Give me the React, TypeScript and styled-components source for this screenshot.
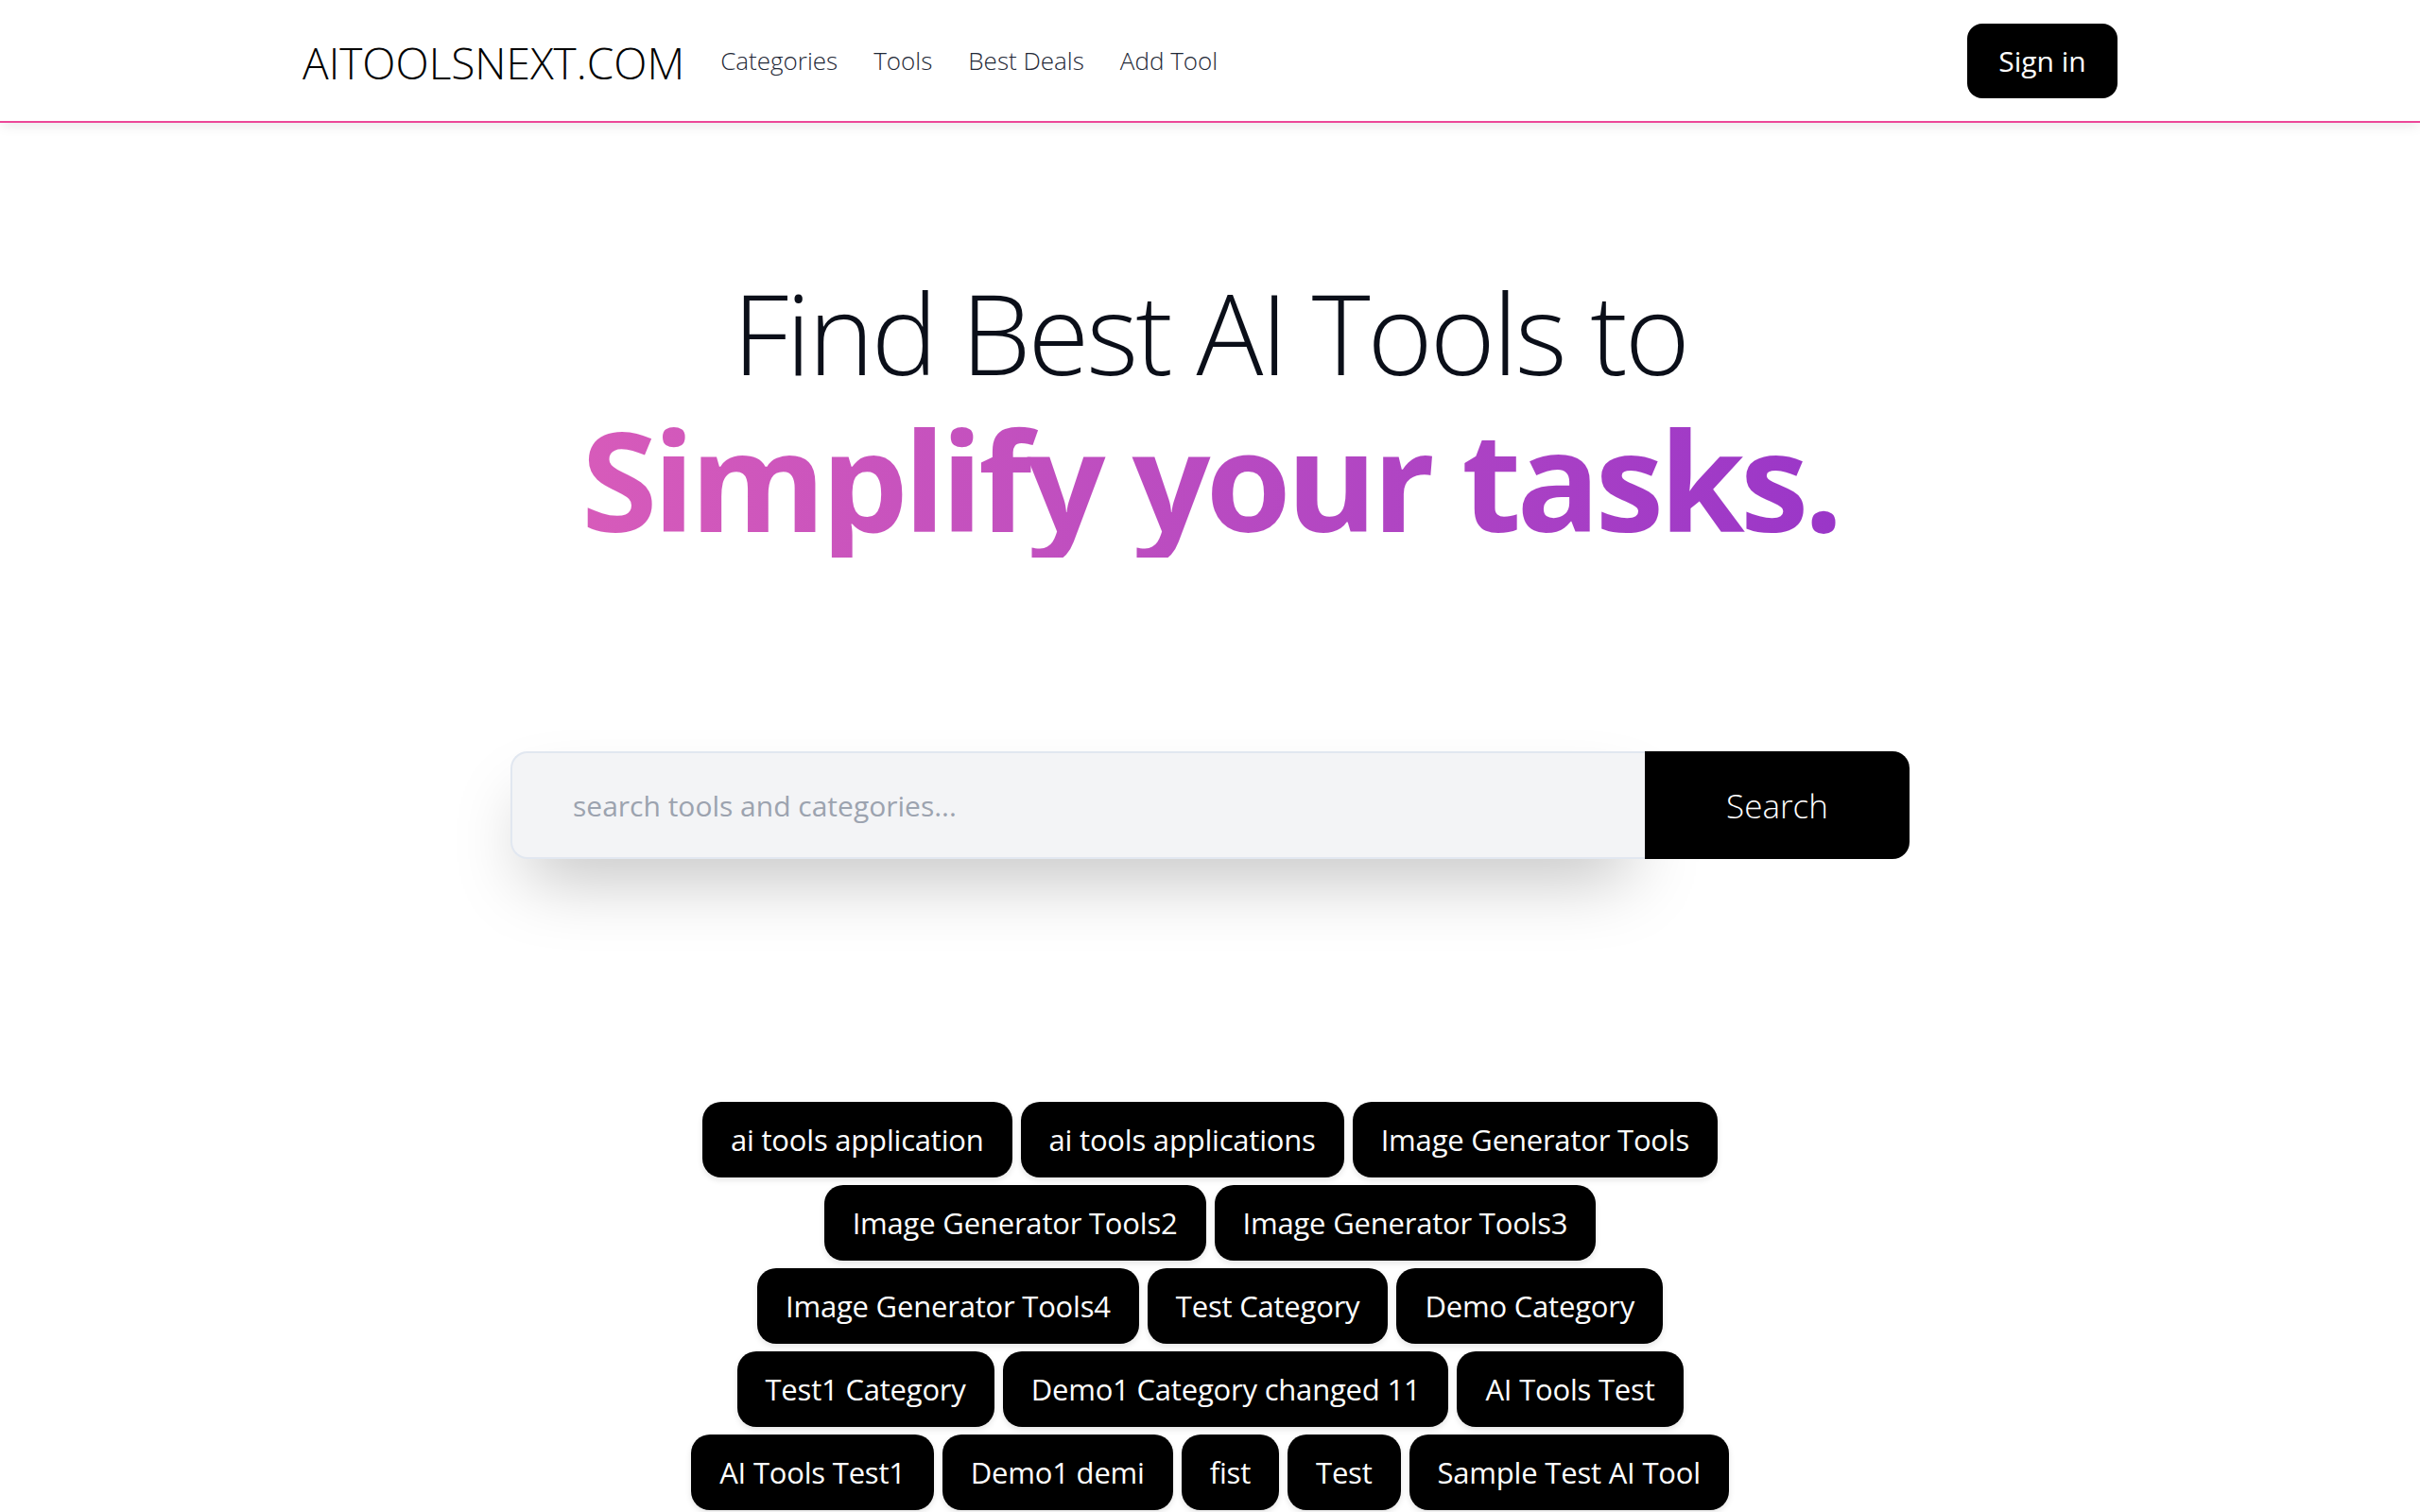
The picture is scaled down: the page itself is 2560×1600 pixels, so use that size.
import React from "react"
import styled, { createGlobalStyle } from "styled-components"

const GlobalStyle = createGlobalStyle`
  html, body {
    margin: 0;
    padding: 0;
    background: #ffffff;
  }
  body {
    font-family: "Open Sans", "Noto Sans", "Liberation Sans", sans-serif;
    color: #0b0f19;
  }
  * {
    box-sizing: border-box;
  }
`

const navLinks = ["Categories", "Tools", "Best Deals", "Add Tool"]

const categories = [
  "ai tools application",
  "ai tools applications",
  "Image Generator Tools",
  "Image Generator Tools2",
  "Image Generator Tools3",
  "Image Generator Tools4",
  "Test Category",
  "Demo Category",
  "Test1 Category",
  "Demo1 Category changed 11",
  "AI Tools Test",
  "AI Tools Test1",
  "Demo1 demi",
  "fist",
  "Test",
  "Sample Test AI Tool",
]

const Header = styled.header`
  background: #ffffff;
  border-bottom: 2px solid #ec4899;
  box-shadow: 0 6px 12px -2px rgba(0, 0, 0, 0.08);
  position: relative;
  z-index: 2;
`

const HeaderInner = styled.div`
  max-width: 1920px;
  height: 128px;
  margin: 0 auto;
  display: flex;
  align-items: center;
  justify-content: space-between;
`

const Brand = styled.div`
  display: flex;
  align-items: center;
  gap: 38px;
`

const Logo = styled.a`
  font-size: 46px;
  font-weight: 300;
  color: #000000;
  text-decoration: none;
  margin-top: 4px;
`

const Nav = styled.nav`
  display: flex;
  align-items: center;
  gap: 38px;
`

const NavLink = styled.a`
  font-size: 26px;
  font-weight: 300;
  color: #1f2937;
  text-decoration: none;
`

const SignIn = styled.button`
  width: 159px;
  height: 79px;
  border: none;
  border-radius: 16px;
  background: #000000;
  color: #ffffff;
  font-family: inherit;
  font-size: 30px;
  font-weight: 400;
  cursor: pointer;
`

const Hero = styled.section`
  padding-top: 151px;
  display: flex;
  flex-direction: column;
  align-items: center;
`

const Title = styled.h1`
  margin: 0;
  text-align: center;
`

const TitleLine = styled.span`
  display: block;
  font-size: 118px;
  font-weight: 300;
  line-height: 1.2;
  color: #0b0f19;
  letter-spacing: -3px;
`

const Highlight = styled.span`
  display: block;
  font-size: 146px;
  font-weight: 700;
  line-height: 1.15;
  letter-spacing: -5px;
  background: linear-gradient(90deg, #d75bba 0%, #b94bc1 50%, #9a36c8 100%);
  -webkit-background-clip: text;
  background-clip: text;
  color: transparent;
`

const SearchForm = styled.form`
  margin-top: 205px;
  display: flex;
  width: 1480px;
  height: 114px;
`

const SearchInput = styled.input`
  flex: 1;
  height: 100%;
  padding: 0 0 0 64px;
  border: 2px solid #e1e7f0;
  border-right: none;
  border-radius: 18px 0 0 18px;
  background: #f3f4f6;
  font-family: inherit;
  font-size: 30px;
  font-weight: 400;
  color: #111827;
  outline: none;
  box-shadow: 0 37px 75px -18px rgba(0, 0, 0, 0.25);
  &::placeholder {
    color: #9ca3af;
  }
`

const SearchButton = styled.button`
  width: 280px;
  height: 100%;
  border: none;
  border-radius: 0 18px 18px 0;
  background: #000000;
  color: #ffffff;
  font-family: inherit;
  font-size: 35px;
  font-weight: 300;
  cursor: pointer;
`

const TagList = styled.div`
  margin: 257px auto 0;
  max-width: 1150px;
  display: flex;
  flex-wrap: wrap;
  justify-content: center;
  gap: 8px 9px;
  padding-bottom: 40px;
`

const Tag = styled.a`
  height: 80px;
  padding: 0 30px;
  display: flex;
  align-items: center;
  border-radius: 20px;
  background: #000000;
  color: #ffffff;
  font-size: 31px;
  font-weight: 400;
  letter-spacing: -0.2px;
  text-decoration: none;
  white-space: nowrap;
  box-shadow: 0 3px 6px rgba(0, 0, 0, 0.1);
`

export default function App() {
  return (
    <>
      <GlobalStyle />
      <Header>
        <HeaderInner>
          <Brand>
            <Logo href="#">AITOOLSNEXT.COM</Logo>
            <Nav>
              {navLinks.map(link => (
                <NavLink key={link} href="#">
                  {link}
                </NavLink>
              ))}
            </Nav>
          </Brand>
          <SignIn>Sign in</SignIn>
        </HeaderInner>
      </Header>
      <Hero>
        <Title>
          <TitleLine>Find Best AI Tools to</TitleLine>
          <Highlight>Simplify your tasks.</Highlight>
        </Title>
        <SearchForm onSubmit={e => e.preventDefault()}>
          <SearchInput placeholder="search tools and categories..." />
          <SearchButton type="submit">Search</SearchButton>
        </SearchForm>
      </Hero>
      <TagList>
        {categories.map(name => (
          <Tag key={name} href="#">
            {name}
          </Tag>
        ))}
      </TagList>
    </>
  )
}
